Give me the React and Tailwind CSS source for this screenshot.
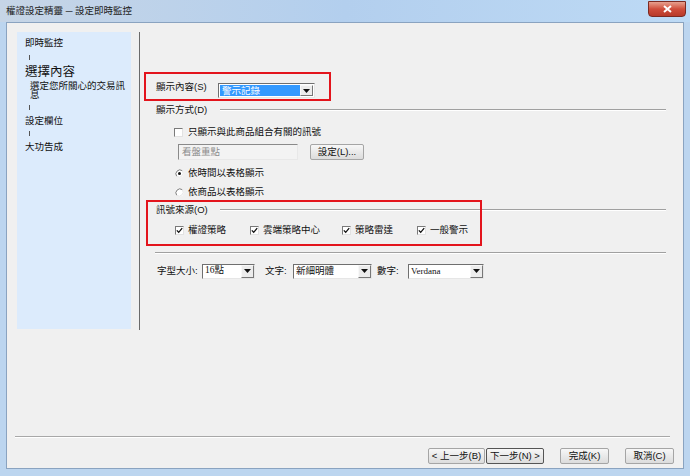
import React from 'react';

function Check() {
  return (
    <span className="flex h-[9px] w-[9px] shrink-0 items-center justify-center border border-[#7a7a7a] border-r-[#e2e2e2] border-b-[#e2e2e2] bg-white">
      <svg width="7" height="7" viewBox="0 0 7 7">
        <path d="M0.8 3.4 L2.7 5.3 L6.2 1.2" fill="none" stroke="#111" strokeWidth="1.3" />
      </svg>
    </span>
  );
}

function EmptyBox() {
  return <span className="h-[9px] w-[9px] shrink-0 border border-[#7a7a7a] border-r-[#e2e2e2] border-b-[#e2e2e2] bg-white" />;
}

function Radio({ on }) {
  return (
    <svg width="9" height="9" viewBox="0 0 9 9" className="shrink-0">
      <circle cx="4.5" cy="4.5" r="4" fill="white" />
      <path d="M1.7 7.3 A4 4 0 0 1 7.3 1.7" fill="none" stroke="#7a7a7a" strokeWidth="1" />
      <path d="M7.3 1.7 A4 4 0 0 1 1.7 7.3" fill="none" stroke="#e6e6e6" strokeWidth="1" />
      {on && <circle cx="4.5" cy="4.5" r="1.5" fill="#111" />}
    </svg>
  );
}

function Arrow() {
  return (
    <span className="flex w-[13px] shrink-0 items-center justify-center border border-[#f8f8f8] border-r-[#777] border-b-[#777] bg-[#ececec]">
      <svg width="7" height="4" viewBox="0 0 7 4">
        <path d="M0 0 H7 L3.5 4 Z" fill="#111" />
      </svg>
    </span>
  );
}

function Heading({ label }) {
  return (
    <div className="flex h-[16px] items-center pl-[11px]">
      <span className="w-[64px] shrink-0">{label}</span>
      <span className="h-[2px] flex-1 border-t border-b border-t-[#a0a0a0] border-b-white" />
    </div>
  );
}

function Btn({ children, strong, className }) {
  return (
    <div
      className={
        'flex h-[16px] items-center justify-center rounded-[2px] border bg-gradient-to-b from-[#f7f7f7] to-[#dcdcdc] ' +
        (strong ? 'border-[#555] ' : 'border-[#a5a5a5] ') +
        className
      }
    >
      {children}
    </div>
  );
}

export default function App() {
  return (
    <div className="flex h-[476px] w-[690px] flex-col overflow-hidden bg-[#bcd5ef] font-['Liberation_Sans','Noto_Sans_CJK_TC',sans-serif] text-[9.5px] text-[#111]">
      {/* title bar */}
      <div className="flex h-[22px] shrink-0 bg-gradient-to-r from-[#c6d5e6] via-[#b3cfee] to-[#bddaf5]">
        <span className="mt-[5px] ml-[6px] leading-[12px] text-[#222]">權證設定精靈 ─ 設定即時監控</span>
        <div className="mt-[1px] mr-[4px] ml-auto flex h-[16px] w-[38px] items-center justify-center rounded-b-[4px] border border-[#7c2a22] bg-gradient-to-b from-[#e6a08f] via-[#cf4d3b] to-[#b83a2a]">
          <svg width="9" height="8" viewBox="0 0 9 8">
            <path d="M1 1 L8 7 M8 1 L1 7" stroke="white" strokeWidth="2" />
          </svg>
        </div>
      </div>

      {/* client area */}
      <div className="mx-[6px] mb-[7px] flex flex-1 flex-col border border-[#8aa3c0] bg-[#f0f0f0]">
        <div className="mt-[9px] flex items-start">
          {/* steps panel */}
          <div className="ml-[10px] flex h-[297px] w-[114px] flex-col items-start bg-[#dcebfc] pl-[8px] pt-[5px]">
            <span className="leading-[12px]">即時監控</span>
            <span className="mt-[6px] ml-[4px] h-[5px] w-px bg-[#555]" />
            <span className="mt-[5px] text-[12.5px] leading-[14px]">選擇內容</span>
            <span className="mt-[2px] ml-[5px] w-[96px] leading-[9px]">選定您所關心的交易訊息</span>
            <span className="mt-[6px] ml-[4px] h-[5px] w-px bg-[#555]" />
            <span className="mt-[5px] leading-[12px]">設定欄位</span>
            <span className="mt-[4px] ml-[4px] h-[5px] w-px bg-[#555]" />
            <span className="mt-[5px] leading-[12px]">大功告成</span>
          </div>
          <div className="ml-[8px] h-[298px] w-px bg-[#6a6a6a]" />

          {/* settings */}
          <div className="relative ml-[5px] flex w-[521px] flex-col">
            <div className="mt-[48px] flex h-[18px] items-start pl-[11px]">
              <span className="w-[62px] leading-[14px]">顯示內容(S)</span>
              <div className="mt-[3px] flex h-[15px] w-[97px] border border-[#6f6f6f] border-r-[#e6e6e6] border-b-[#e6e6e6] bg-white p-px">
                <span className="flex flex-1 items-center bg-[#3399ff] pl-[2px] leading-none text-white">警示記錄</span>
                <Arrow />
              </div>
            </div>

            <div className="mt-[4px]">
              <Heading label="顯示方式(D)" />
            </div>

            <div className="mt-[6px] flex h-[16px] items-center pl-[29px]">
              <EmptyBox />
              <span className="ml-[5px]">只顯示與此商品組合有關的訊號</span>
            </div>

            <div className="mt-[4px] flex h-[16px] items-center pl-[33px]">
              <div className="flex h-[16px] w-[120px] items-center border border-[#8a8a8a] border-r-[#e8e8e8] border-b-[#e8e8e8] bg-[#f3f3f3] pl-[3px] text-[#8c8c8c]">
                看盤重點
              </div>
              <Btn className="ml-[12px] w-[54px]">設定(L)...</Btn>
            </div>

            <div className="mt-[5px] flex h-[16px] items-center pl-[30px]">
              <Radio on />
              <span className="ml-[4px]">依時間以表格顯示</span>
            </div>
            <div className="mt-[3px] flex h-[16px] items-center pl-[30px]">
              <Radio />
              <span className="ml-[4px]">依商品以表格顯示</span>
            </div>

            <div className="mt-[2px]">
              <Heading label="訊號來源(O)" />
            </div>

            <div className="mt-[4px] flex h-[16px] items-center pl-[30px]">
              <div className="flex w-[75px] items-center">
                <Check />
                <span className="ml-[4px]">權證策略</span>
              </div>
              <div className="flex w-[92px] items-center">
                <Check />
                <span className="ml-[4px]">雲端策略中心</span>
              </div>
              <div className="flex w-[75px] items-center">
                <Check />
                <span className="ml-[4px]">策略雷達</span>
              </div>
              <div className="flex items-center">
                <Check />
                <span className="ml-[4px]">一般警示</span>
              </div>
            </div>

            <div className="mt-[14px] ml-[10px] h-[2px] border-t border-b border-t-[#a0a0a0] border-b-white" />

            <div className="mt-[9px] flex h-[16px] items-center pl-[12px]">
              <span className="w-[45px]">字型大小:</span>
              <div className="flex h-[15px] w-[53px] border border-[#6f6f6f] border-r-[#e6e6e6] border-b-[#e6e6e6] bg-white">
                <span className="flex flex-1 items-center pl-[2px] font-['Liberation_Serif','Noto_Sans_CJK_TC',serif] leading-none">16點</span>
                <Arrow />
              </div>
              <span className="ml-[10px] w-[28px]">文字:</span>
              <div className="flex h-[15px] w-[79px] border border-[#6f6f6f] border-r-[#e6e6e6] border-b-[#e6e6e6] bg-white">
                <span className="flex flex-1 items-center pl-[2px] leading-none">新細明體</span>
                <Arrow />
              </div>
              <span className="ml-[5px] w-[31px]">數字:</span>
              <div className="flex h-[15px] w-[76px] border border-[#6f6f6f] border-r-[#e6e6e6] border-b-[#e6e6e6] bg-white">
                <span className="flex flex-1 items-center pl-[2px] font-['Liberation_Serif',serif] text-[9px] leading-none">Verdana</span>
                <Arrow />
              </div>
            </div>

            {/* annotation boxes */}
            <div className="absolute top-[40px] left-[-1px] h-[29px] w-[187px] border-2 border-[#e3141c]" />
            <div className="absolute top-[168px] left-[1px] h-[46px] w-[336px] border-2 border-[#e3141c]" />
          </div>
        </div>

        {/* footer */}
        <div className="mt-auto">
          <div className="mr-[13px] ml-[8px] h-[2px] border-t border-b border-t-[#a8a8a8] border-b-white" />
          <div className="mt-[10px] mb-[4px] flex">
            <Btn className="ml-[421px] w-[57px]">&lt; 上一步(B)</Btn>
            <Btn strong className="ml-[1px] w-[58px]">下一步(N) &gt;</Btn>
            <Btn className="ml-[16px] w-[49px]">完成(K)</Btn>
            <Btn className="ml-[16px] w-[49px]">取消(C)</Btn>
          </div>
        </div>
      </div>
    </div>
  );
}
